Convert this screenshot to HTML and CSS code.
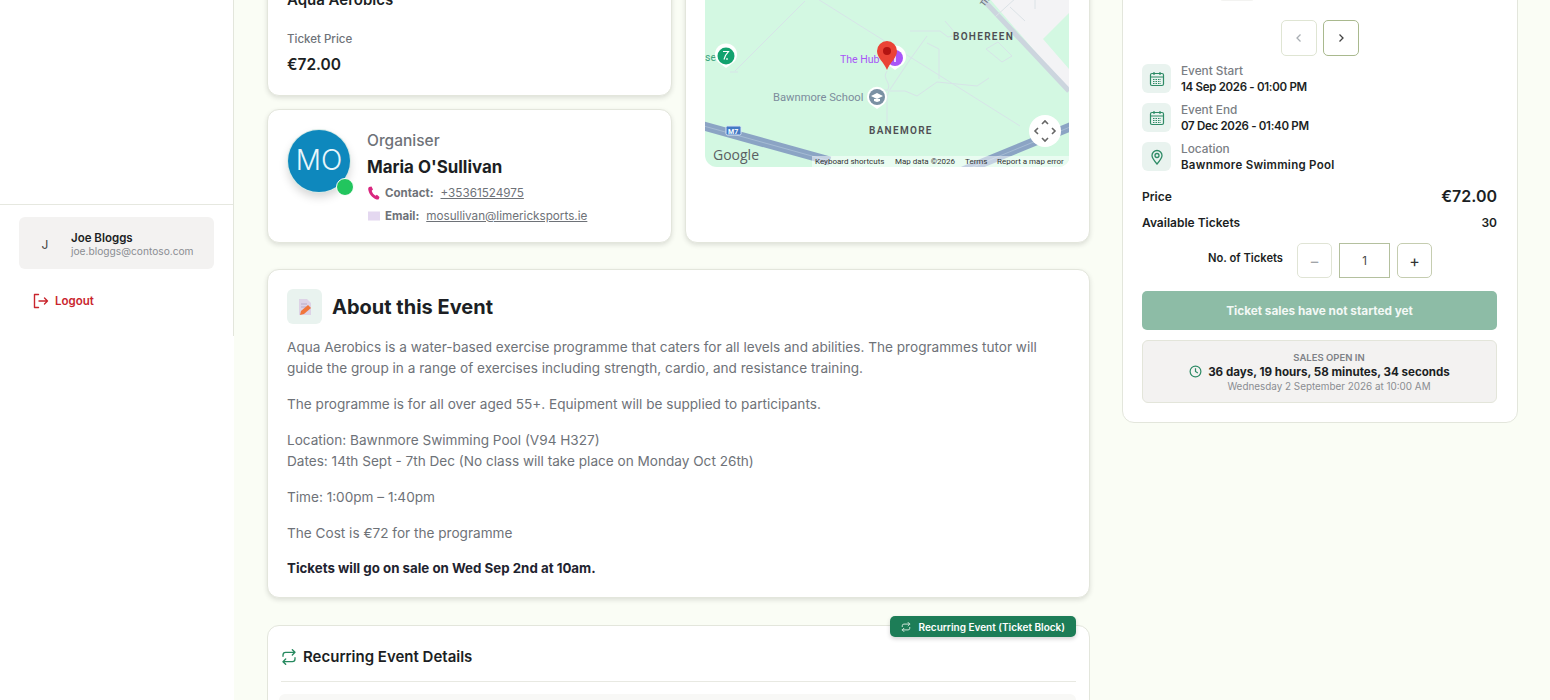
FILE: index.html
```html
<!DOCTYPE html>
<html lang="en">
<head>
  <meta charset="UTF-8">
  <title>Aqua Aerobics</title>
  <link rel="stylesheet" href="styles.css">
</head>
<body>
  <div class="page">
    <aside class="sidebar">
      <div class="side-inner">
        <div class="user-box">
          <div class="user-card">
            <span class="user-initial">J</span>
            <div>
              <div class="user-name">Joe Bloggs</div>
              <div class="user-mail">joe.bloggs@contoso.com</div>
            </div>
          </div>
          <a class="logout">
            <svg width="16" height="16" viewBox="0 0 16 16" fill="none" stroke="#c9252d" stroke-width="1.4" stroke-linecap="round" stroke-linejoin="round"><path d="M5.500 1.500H1.500v13h4M6 8h8.500M11.500 5l3 3-3 3"/></svg>
            Logout
          </a>
        </div>
      </div>
    </aside>

    <main class="main">
      <div class="content">
        <div class="left-col">
          <div class="top-grid">
            <div class="stack">
              <section class="card ticket-card">
                <div class="event-name">Aqua Aerobics</div>
                <div class="ticket-label">Ticket Price</div>
                <div class="ticket-price">€72.00</div>
              </section>
              <section class="card organiser-card">
                <div class="avatar">MO<span class="online"></span></div>
                <div class="org-info">
                  <div class="org-label">Organiser</div>
                  <div class="org-name">Maria O'Sullivan</div>
                  <div class="org-line">
                    <svg width="14" height="14" viewBox="0 0 14 14"><path d="M2 1l2.500-.500 1.500 3-1.300 1.200c.6 2.200 2 3.900 3.800 5l1.400-1 2.600 2.200-.8 2.300c-.6.500-1.700.500-2.800 0C5 11.600 1.800 7.500 1.200 3.200 1.100 2.200 1.400 1.500 2 1z" fill="#d9267f"/></svg>
                    <b>Contact:</b> <a>+35361524975</a>
                  </div>
                  <div class="org-line">
                    <svg width="14" height="14" viewBox="0 0 14 14"><rect x="1" y="2.500" width="12" height="9" fill="#e4d8f0"/></svg>
                    <b>Email:</b> <a>mosullivan@limericksports.ie</a>
                  </div>
                </div>
              </section>
            </div>
            <section class="card map-card">
              <div class="map">
                <svg class="map-svg" width="364" height="226" viewBox="0 -60 364 226">
                  <rect x="0" y="-60" width="364" height="226" fill="#d3f8e2"/>
                  <path d="M278 -10L364 -10V12L338 38L364 68V90Z" fill="#f3f3f5"/>
                  <path d="M270 -10L364 90" stroke="#ccd5de" stroke-width="5" fill="none"/>
                  <path d="M290 16l22-20M305 6l15 14M330 -4v12" stroke="#dbe2e6" stroke-width="1" fill="none"/>
                  <text x="0" y="0" class="map-road" transform="translate(279 6) rotate(-52)">Th</text>
                  <g stroke="#d7e4e8" stroke-width="1" fill="none">
                    <path d="M100 -10L315 125M30 70L100 0M25 71h8M222 35l-18 25-20 30-2 6v35M182 70c-6 8 6 12 0 20v-1h-8M185 90h15l12 5 20-14 40 4 12-8M222 42l12 6 0 30M205 30l30 0 8 6 10-2M240 20l12 14M281 48l12-7 14 14-10 6z"/>
                  </g>
                  <path d="M-5 124L125 160" stroke="#8ba4c4" stroke-width="9" fill="none"/>
                  <path d="M-5 124L125 160" stroke="#a5bbd3" stroke-width="1" fill="none"/>
                  <path d="M258 170L370 124" stroke="#8ba4c4" stroke-width="9" fill="none"/>
                  <path d="M258 170L370 124" stroke="#a5bbd3" stroke-width="1" fill="none"/>
                  <rect x="21" y="125" width="15" height="9" rx="1.500" fill="#4379c4" stroke="#d9e6f5"/>
                  <text x="23" y="133" class="map-shield">M7</text>
                  <text x="0" y="60" class="map-poi-green">se</text>
                  <path d="M21 67l-8-6a11 11 0 1 1 16 0z" fill="#fff"/>
                  <circle cx="21" cy="55" r="8.500" fill="#12a26e"/>
                  <path d="M18 50.500h5.500l-3 4-1.500 4M22 57v2" stroke="#fff" stroke-width="1.200" fill="none"/>
                  <text x="135" y="62" class="map-poi-purple">The Hub</text>
                  <path d="M190 69l-7-5a11 11 0 1 1 14 0z" fill="#fff"/>
                  <circle cx="190" cy="57" r="8" fill="#a855f7"/>
                  <path d="M190 53v8" stroke="#fff" stroke-width="1.500"/>
                  <text x="68" y="100" class="map-poi-grey">Bawnmore School</text>
                  <path d="M172 108l-7-5a10 10 0 1 1 14 0z" fill="#fff"/>
                  <circle cx="172" cy="96" r="8" fill="#7a90a3"/>
                  <path d="M172 92l6 3-6 3-6-3zM169 98v2l3 1 3-1v-2" fill="#fff"/>
                  <text x="248" y="39" class="map-area">BOHEREEN</text>
                  <text x="164" y="133" class="map-area">BANEMORE</text>
                  <path d="M182 69c-3-8-10-12-10-19a10 10 0 0 1 20 0c0 7-7 11-10 19z" fill="#ea4335"/>
                  <circle cx="182" cy="50" r="4" fill="#b31412"/>
                  <text x="8" y="159" class="map-logo">Google</text>
                  <rect x="107" y="155" width="257" height="11" fill="#fff" fill-opacity=".5"/>
                  <text x="110" y="163" class="map-foot">Keyboard shortcuts</text>
                  <text x="190" y="163" class="map-foot">Map data ©2026</text>
                  <text x="260" y="163" class="map-foot">Terms</text>
                  <text x="292" y="163" class="map-foot">Report a map error</text>
                  <circle cx="340" cy="130" r="16" fill="#fff"/>
                  <path d="M337 123l3-3 3 3M337 137l3 3 3-3M333 127l-3 3 3 3M347 127l3 3-3 3" stroke="#666" stroke-width="1.600" fill="none"/>
                </svg>
              </div>
            </section>
          </div>

          <section class="card about-card">
            <div class="about-head">
              <span class="about-icon">
                <svg width="18" height="18" viewBox="0 0 18 18"><path d="M3 1h8l4 4v12H3z" fill="#ddd3e6"/><path d="M5 6h6M5 9h5" stroke="#b9abc8"/><path d="M4 17l1-4 7-6 3 3-7 6z" fill="#f0763a"/></svg>
              </span>
              <h2>About this Event</h2>
            </div>
            <p>Aqua Aerobics is a water-based exercise programme that caters for all levels and abilities. The programmes tutor will guide the group in a range of exercises including strength, cardio, and resistance training.</p>
            <p>The programme is for all over aged 55+. Equipment will be supplied to participants.</p>
            <p>Location: Bawnmore Swimming Pool (V94 H327)<br>Dates: 14th Sept - 7th Dec (No class will take place on Monday Oct 26th)</p>
            <p>Time: 1:00pm – 1:40pm</p>
            <p>The Cost is €72 for the programme</p>
            <p class="about-strong">Tickets will go on sale on Wed Sep 2nd at 10am.</p>
          </section>

          <section class="card recurring-card">
            <span class="recurring-badge">
              <svg width="10" height="10" viewBox="0 0 24 24" fill="none" stroke="#cfe5da" stroke-width="2.400" stroke-linecap="round" stroke-linejoin="round"><path d="M17 1l4 4-4 4M3 11V9a4 4 0 0 1 4-4h14M7 23l-4-4 4-4M21 13v2a4 4 0 0 1-4 4H3"/></svg>
              Recurring Event (Ticket Block)
            </span>
            <div class="recurring-head">
              <svg width="16" height="16" viewBox="0 0 24 24" fill="none" stroke="#26895f" stroke-width="2" stroke-linecap="round" stroke-linejoin="round"><path d="M17 1l4 4-4 4M3 11V9a4 4 0 0 1 4-4h14M7 23l-4-4 4-4M21 13v2a4 4 0 0 1-4 4H3"/></svg>
              <h3>Recurring Event Details</h3>
            </div>
            <div class="recurring-body"></div>
          </section>
        </div>

        <aside class="card buy-card">
          <div class="thumb-peek"></div>
          <div class="thumb-nav">
            <button class="nav-btn off"><svg width="10" height="10" viewBox="0 0 10 10" fill="none" stroke="#a9aeb3" stroke-width="1.300"><path d="M6.500 1.500L3 5l3.500 3.500"/></svg></button>
            <button class="nav-btn"><svg width="10" height="10" viewBox="0 0 10 10" fill="none" stroke="#444" stroke-width="1.300"><path d="M3.500 1.500L7 5 3.500 8.500"/></svg></button>
          </div>
          <div class="info-row">
            <span class="info-icon"><svg width="16" height="16" viewBox="0 0 16 16" fill="none" stroke="#2e8b66" stroke-width="1.200"><rect x="1.500" y="2.500" width="13" height="12" rx="1.500"/><path d="M1.500 6h13M5 1v3M11 1v3"/><path d="M4 8.500h8M4 10.500h8M4 12.500h8" stroke-dasharray="1.500 1"/></svg></span>
            <div><div class="info-label">Event Start</div><div class="info-value date">14 Sep 2026 - 01:00 PM</div></div>
          </div>
          <div class="info-row">
            <span class="info-icon"><svg width="16" height="16" viewBox="0 0 16 16" fill="none" stroke="#2e8b66" stroke-width="1.200"><rect x="1.500" y="2.500" width="13" height="12" rx="1.500"/><path d="M1.500 6h13M5 1v3M11 1v3"/><path d="M4 8.500h8M4 10.500h8M4 12.500h8" stroke-dasharray="1.500 1"/></svg></span>
            <div><div class="info-label">Event End</div><div class="info-value date">07 Dec 2026 - 01:40 PM</div></div>
          </div>
          <div class="info-row">
            <span class="info-icon"><svg width="16" height="16" viewBox="0 0 16 16" fill="none" stroke="#2e8b66" stroke-width="1.300"><path d="M8 15c-3-3.500-5-6-5-8.500a5 5 0 0 1 10 0C13 9 11 11.500 8 15z"/><circle cx="8" cy="6.500" r="2"/></svg></span>
            <div><div class="info-label">Location</div><div class="info-value place">Bawnmore Swimming Pool</div></div>
          </div>
          <div class="price-row"><span>Price</span><span class="price-value">€72.00</span></div>
          <div class="avail-row"><span>Available Tickets</span><span>30</span></div>
          <div class="qty-row">
            <span class="qty-label">No. of Tickets</span>
            <button class="qty-btn off">−</button>
            <input class="qty-input" value="1">
            <button class="qty-btn">+</button>
          </div>
          <button class="buy-btn">Ticket sales have not started yet</button>
          <div class="countdown">
            <svg width="13" height="13" viewBox="0 0 14 14" fill="none" stroke="#2e8b66" stroke-width="1.300"><circle cx="7" cy="7" r="5.800"/><path d="M7 3.500V7l2.500 1.500"/></svg>
            <div>
              <div class="count-label">SALES OPEN IN</div>
              <div class="count-time">36 days, 19 hours, 58 minutes, 34 seconds</div>
              <div class="count-date">Wednesday 2 September 2026 at 10:00 AM</div>
            </div>
          </div>
        </aside>
      </div>
    </main>
  </div>
</body>
</html>
```

FILE: styles.css
```css
* {
  box-sizing: border-box;
}
html, body {
  margin: 0;
  padding: 0;
  height: 700px;
  overflow: hidden;
}
body {
  font-family: Inter, "Open Sans", sans-serif;
  background: #fafdf5;
  color: #1c1f24;
}
button, input {
  font-family: inherit;
}
.page {
  display: flex;
  height: 700px;
}

/* sidebar */
.sidebar {
  width: 234px;
  flex: none;
  background: #fff;
}
.side-inner {
  height: 336px;
  padding-top: 204px;
  border-right: 1px solid #e3e6dc;
}
.user-box {
  border-top: 1px solid #e6e8e0;
  padding: 12px 19px 0;
}
.user-card {
  display: flex;
  align-items: center;
  height: 52px;
  padding-top: 2px;
  background: #f3f2f1;
  border-radius: 6px;
}
.user-initial {
  width: 52px;
  text-align: center;
  font-size: 12px;
  color: #444;
}
.user-name {
  font-size: 11.500px;
  font-weight: 600;
}
.user-mail {
  font-size: 10.200px;
  color: #8a8d92;
}
.logout {
  display: flex;
  align-items: center;
  gap: 6px;
  margin: 24px 0 0 14px;
  font-size: 11.500px;
  font-weight: 600;
  color: #c9252d;
}

/* main column */
.main {
  flex: 1;
  min-width: 0;
  height: 700px;
  overflow: hidden;
}
.content {
  display: flex;
  align-items: flex-start;
  gap: 32px;
  margin-top: -60px;
  padding-left: 33px;
}
.left-col {
  width: 823px;
  flex: none;
}
.card {
  background: #fff;
  border: 1px solid #e3e6dc;
  border-radius: 12px;
}
.top-grid {
  display: grid;
  grid-template-columns: 405px 405px;
  gap: 13px;
}
.stack {
  display: flex;
  flex-direction: column;
  gap: 13px;
}
.stack .card, .map-card, .about-card {
  box-shadow: 0 2px 5px #0000001f;
}
.ticket-card {
  height: 156px;
  padding: 49px 19px 0;
}
.event-name {
  font-size: 15px;
  font-weight: 600;
  line-height: 20px;
}
.ticket-label {
  margin-top: 20px;
  font-size: 11.500px;
  font-weight: 500;
  line-height: 18px;
  color: #6e7278;
}
.ticket-price {
  margin-top: 5px;
  font-size: 15.500px;
  font-weight: 600;
  line-height: 24px;
}
.organiser-card {
  display: flex;
  height: 134px;
  padding: 20px 0 0 20px;
  gap: 17px;
}
.avatar {
  position: relative;
  width: 62px;
  height: 62px;
  flex: none;
  border-radius: 50%;
  background: #0e88bd;
  box-shadow: 0 0 0 1px #d8ebe6, 0 5px 10px #0000002b;
  color: #e8f6fb;
  font-size: 28px;
  font-weight: 300;
  line-height: 61px;
  text-align: center;
}
.online {
  position: absolute;
  right: -4px;
  bottom: -4px;
  width: 18px;
  height: 18px;
  border: 1.500px solid #fff;
  border-radius: 50%;
  background: #22c55e;
}
.org-info {
  padding-top: 1px;
}
.org-label {
  font-size: 15.500px;
  font-weight: 500;
  line-height: 20px;
  color: #6e7278;
}
.org-name {
  margin-top: 4px;
  font-size: 16.900px;
  font-weight: 700;
  line-height: 24px;
}
.org-line {
  display: flex;
  align-items: center;
  gap: 4px;
  height: 23px;
  font-size: 11.500px;
  color: #6e7278;
}
.org-name + .org-line {
  margin-top: 2px;
}
.org-line a {
  margin-left: 3px;
  font-size: 11.700px;
  color: #6e7278;
  text-decoration: underline;
}
.map-card {
  padding: 0 19px;
}
.map {
  height: 226px;
  overflow: hidden;
  border-radius: 0 0 12px 12px;
}
.map-svg {
  display: block;
}
.map-area {
  font: 600 10px Roboto, sans-serif;
  letter-spacing: 1.300px;
  fill: #4e4e52;
}
.map-road {
  font: 500 8px Roboto, sans-serif;
  fill: #6c7680;
}
.map-poi-grey {
  font: 400 11.200px Roboto, sans-serif;
  fill: #7c8c9c;
}
.map-poi-purple {
  font: 400 10.500px Roboto, sans-serif;
  fill: #a855f7;
}
.map-poi-green {
  font: 400 10.500px Roboto, sans-serif;
  fill: #3aa27e;
}
.map-shield {
  font: 700 7px Roboto, sans-serif;
  fill: #fff;
}
.map-logo {
  font: 500 14px "Open Sans", sans-serif;
  fill: #5b5f63;
}
.map-foot {
  font: 400 8px Roboto, sans-serif;
  fill: #333;
}

/* about */
.about-card {
  height: 329px;
  margin-top: 26px;
  padding: 19px 19px 0;
}
.about-head {
  display: flex;
  align-items: center;
  gap: 10px;
  margin-bottom: 13px;
}
.about-icon {
  display: flex;
  align-items: center;
  justify-content: center;
  width: 35px;
  height: 35px;
  background: #e9f3ef;
  border-radius: 6px;
}
.about-head h2 {
  margin: 0;
  font-size: 20px;
  font-weight: 700;
}
.about-card p {
  margin: 0 0 15px;
  font-size: 13.600px;
  line-height: 21px;
  color: #6e7278;
}
.about-card .about-strong {
  margin-top: -1px;
  font-size: 13.300px;
  font-weight: 700;
  color: #1f2430;
}

/* recurring */
.recurring-card {
  position: relative;
  height: 200px;
  margin-top: 27px;
  padding: 0 13px;
}
.recurring-badge {
  position: absolute;
  top: -10px;
  right: 13px;
  display: flex;
  align-items: center;
  gap: 8px;
  height: 21px;
  padding: 0 11px;
  border-radius: 5px;
  background: #1d7d57;
  box-shadow: 0 2px 4px #0000002b;
  color: #fff;
  font-size: 10px;
  font-weight: 600;
}
.recurring-head {
  display: flex;
  align-items: center;
  gap: 6px;
  height: 56px;
  padding-top: 6px;
  border-bottom: 1px solid #e8e9e2;
}
.recurring-head h3 {
  margin: 0;
  font-size: 15px;
  font-weight: 600;
}
.recurring-body {
  height: 60px;
  margin: 12px 0 0 -2px;
  border-radius: 6px;
  background: #f8f8f6;
}

/* ticket panel */
.buy-card {
  width: 396px;
  flex: none;
  height: 483px;
  padding: 57px 20px 0 19px;
}
.thumb-peek {
  width: 34px;
  height: 3px;
  margin: 0 0 19px 78px;
  border-radius: 0 0 4px 4px;
  background: #f3f3f1;
}
.thumb-nav {
  display: flex;
  justify-content: center;
  gap: 6px;
  margin-bottom: 8px;
}
.nav-btn {
  display: flex;
  align-items: center;
  justify-content: center;
  width: 36px;
  height: 36px;
  padding: 0;
  background: #fff;
  border: 1px solid #a9b98e;
  border-radius: 5px;
}
.nav-btn.off {
  border-color: #dfe5d3;
}
.info-row {
  display: flex;
  align-items: center;
  gap: 10px;
  height: 29px;
  margin-bottom: 10px;
}
.info-icon {
  display: flex;
  align-items: center;
  justify-content: center;
  width: 29px;
  height: 29px;
  background: #e9f3ef;
  border-radius: 6px;
}
.info-label {
  font-size: 11.800px;
  font-weight: 500;
  line-height: 16px;
  color: #7a7e84;
}
.info-value {
  font-size: 11.500px;
  font-weight: 600;
  line-height: 16px;
}
.info-value.date {
  letter-spacing: -0.3px;
}
.info-value.place {
  letter-spacing: 0.27px;
}
.price-row, .avail-row {
  display: flex;
  justify-content: space-between;
  align-items: center;
  font-size: 12px;
  font-weight: 600;
}
.price-row {
  height: 24px;
  margin-top: 13px;
}
.price-value {
  font-size: 16px;
}
.avail-row {
  height: 24px;
  margin-top: 2px;
}
.qty-row {
  display: flex;
  align-items: flex-start;
  gap: 7px;
  margin-top: 9px;
  padding-left: 66px;
}
.qty-label {
  width: 82px;
  font-size: 11.200px;
  font-weight: 600;
  line-height: 30px;
}
.qty-btn {
  width: 35px;
  height: 35px;
  padding: 0;
  background: #fff;
  border: 1px solid #c5cdb0;
  border-radius: 5px;
  color: #333;
  font-size: 16px;
}
.qty-btn.off {
  border-color: #e0e4d5;
  color: #a0a4a8;
}
.qty-input {
  width: 51px;
  height: 35px;
  padding: 0;
  border: 1px solid #b4c09e;
  text-align: center;
  font-size: 11.500px;
  color: #444;
}
.buy-btn {
  display: block;
  width: 100%;
  height: 39px;
  margin-top: 13px;
  background: #8dbca6;
  border: none;
  border-radius: 5px;
  color: #f3f8f5;
  font-size: 11.800px;
  font-weight: 700;
}
.countdown {
  display: flex;
  align-items: center;
  justify-content: center;
  gap: 6px;
  height: 63px;
  margin-top: 10px;
  background: #f3f2f1;
  border: 1px solid #e3e5da;
  border-radius: 6px;
  text-align: center;
}
.count-label {
  font-size: 9.500px;
  font-weight: 600;
  line-height: 13px;
  color: #7e8186;
}
.count-time {
  font-size: 11.600px;
  font-weight: 700;
  line-height: 16px;
}
.count-date {
  font-size: 9.900px;
  line-height: 13px;
  color: #8a8d92;
}
```
